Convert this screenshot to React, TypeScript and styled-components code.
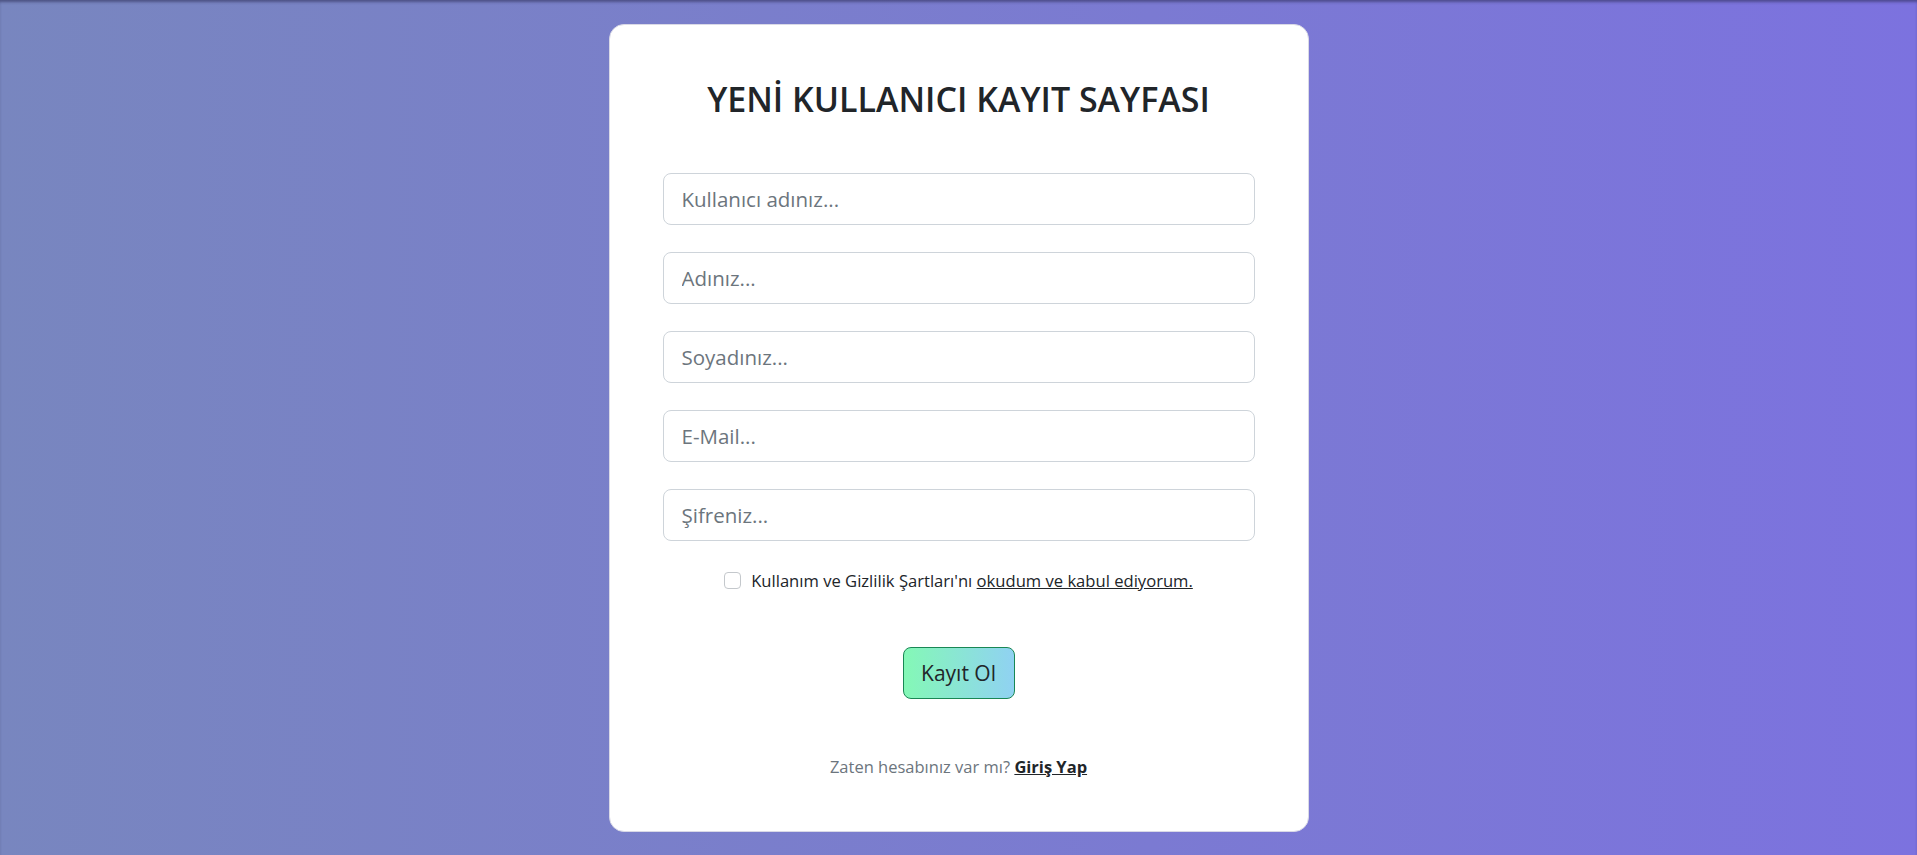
import React from 'react';
import styled, { createGlobalStyle } from 'styled-components';

const GlobalStyle = createGlobalStyle`
  * {
    box-sizing: border-box;
  }
  body {
    margin: 0;
    font-family: 'Open Sans', 'Noto Sans', sans-serif;
    color: #212529;
  }
`;

const Page = styled.main`
  min-height: 855px;
  display: flex;
  justify-content: center;
  align-items: flex-start;
  padding-top: 24px;
  background: linear-gradient(90deg, #7886bf 0%, #7b7ad2 60%, #7c72df 100%);
  box-shadow: inset 0 3px 3px -1px rgba(40, 40, 80, 0.55);
`;

const Card = styled.section`
  width: 700px;
  height: 808px;
  background: #fff;
  border: 1px solid #d9d9e6;
  border-radius: 15px;
  padding: 0 53px;
  display: flex;
  flex-direction: column;
  align-items: stretch;
`;

const Title = styled.h2`
  margin: 52px 0 0;
  text-align: center;
  font-size: 34px;
  font-weight: 600;
  line-height: 44px;
  color: #212529;
`;

const Fields = styled.div`
  margin-top: 52px;
  display: flex;
  flex-direction: column;
  gap: 27px;
`;

const Input = styled.input`
  width: 100%;
  height: 52px;
  padding: 0 18px;
  font-family: inherit;
  font-size: 20.5px;
  color: #212529;
  background: #fff;
  border: 1px solid #ced4da;
  border-radius: 8px;
  outline: none;

  &::placeholder {
    color: #6c757d;
  }
`;

const Agreement = styled.label`
  margin-top: 28px;
  display: flex;
  justify-content: center;
  align-items: center;
  gap: 10px;
  font-size: 16.6px;
  color: #212529;
`;

const Check = styled.input`
  appearance: none;
  margin: 0;
  width: 17px;
  height: 17px;
  border: 1px solid #c4c8cc;
  border-radius: 4px;
  background: #fff;
`;

const TextLink = styled.a<{ $bold?: boolean }>`
  color: #212529;
  text-decoration: underline;
  font-weight: ${(p) => (p.$bold ? 700 : 400)};
`;

const ButtonRow = styled.div`
  margin-top: 55px;
  display: flex;
  justify-content: center;
`;

const SubmitButton = styled.button`
  width: 112px;
  height: 52px;
  padding: 0;
  font-family: inherit;
  font-size: 21px;
  color: #212529;
  background: linear-gradient(90deg, #84f8b6 0%, #90d2f2 100%);
  border: 1px solid #198754;
  border-radius: 8px;
  cursor: pointer;
`;

const Footer = styled.p`
  margin: 56px 0 0;
  text-align: center;
  font-size: 16.5px;
  color: #6c757d;
`;

export default function App() {
  return (
    <>
      <GlobalStyle />
      <Page>
        <Card>
          <Title>YENİ KULLANICI KAYIT SAYFASI</Title>
          <Fields>
            <Input type="text" placeholder="Kullanıcı adınız..." />
            <Input type="text" placeholder="Adınız..." />
            <Input type="text" placeholder="Soyadınız..." />
            <Input type="email" placeholder="E-Mail..." />
            <Input type="password" placeholder="Şifreniz..." />
          </Fields>
          <Agreement>
            <Check type="checkbox" />
            <span>
              Kullanım ve Gizlilik Şartları'nı{' '}
              <TextLink href="#">okudum ve kabul ediyorum.</TextLink>
            </span>
          </Agreement>
          <ButtonRow>
            <SubmitButton type="submit">Kayıt Ol</SubmitButton>
          </ButtonRow>
          <Footer>
            Zaten hesabınız var mı?{' '}
            <TextLink href="#" $bold>
              Giriş Yap
            </TextLink>
          </Footer>
        </Card>
      </Page>
    </>
  );
}
